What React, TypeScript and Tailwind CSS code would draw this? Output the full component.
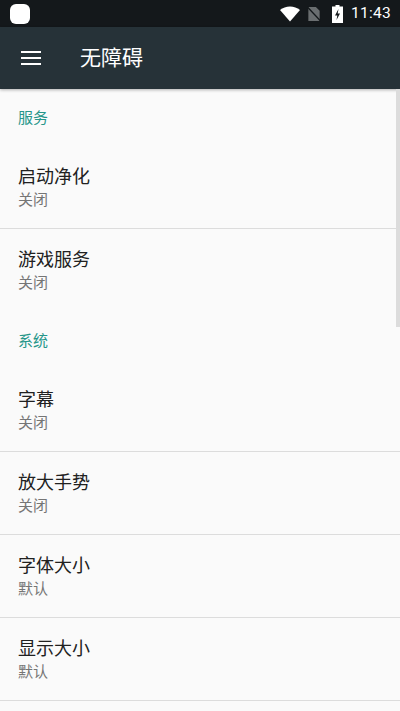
const FONT = "font-['Roboto','Noto_Sans_CJK_SC',sans-serif]"

function SettingRow({ title, summary, divider = true }: { title: string; summary: string; divider?: boolean }) {
  return (
    <div className={`h-[83px] px-[18px] pt-[18px] ${divider ? 'border-b border-[#dcdcdc]' : ''}`}>
      <div className="text-[18px] leading-[26px] text-[#212121]">{title}</div>
      <div className="text-[15px] leading-[21px] text-[#757575]">{summary}</div>
    </div>
  )
}

function SectionLabel({ label }: { label: string }) {
  return <div className="h-[57px] px-[18px] pt-[18px] text-[15px] leading-[22px] text-[#26968a]">{label}</div>
}

function StatusIcons() {
  return (
    <div className="flex items-center">
      {/* wifi */}
      <svg width="20" height="16" viewBox="0 0 20 15" className="mr-[7px]">
        <path d="M0 3.6C2.8 1.3 6.2 0 10 0s7.2 1.3 10 3.6L10 15z" fill="#fff" />
      </svg>
      {/* no sim */}
      <svg width="14" height="16" viewBox="0 0 14 17" className="mr-[11px]">
        <path d="M1 1h8l4 4v11H1z" fill="#6a6e70" />
        <path d="M0 1l14 15" stroke="#14181b" strokeWidth="1.5" />
      </svg>
      {/* battery charging */}
      <svg width="11" height="18" viewBox="0 0 11 18" className="mr-[8px]">
        <path d="M3.5 0h4v1.5H11V18H0V1.5h3.5z" fill="#fff" />
        <path d="M6.5 4L3 10.5h2.3L4.5 15 8 8.5H5.7z" fill="#14181b" />
      </svg>
      <span className="text-[15.5px] leading-none font-normal text-white tracking-[0.3px]">11:43</span>
    </div>
  )
}

export default function App() {
  return (
    <div className={`relative w-[400px] h-[711px] overflow-hidden bg-[#fafafa] ${FONT}`}>
      {/* Status bar */}
      <div className="h-[27px] bg-[#14181b] flex items-center justify-between pl-[10px] pr-[9px]">
        <div className="w-[20px] h-[20px] rounded-[6px] bg-white" />
        <StatusIcons />
      </div>

      {/* Toolbar */}
      <div className="h-[62px] bg-[#263238] flex items-center pl-[21px] shadow-[0_1px_3px_rgba(0,0,0,0.3)] relative">
        <div className="w-[20px] flex flex-col gap-[3.5px]">
          <div className="h-[2.5px] bg-white" />
          <div className="h-[2.5px] bg-white" />
          <div className="h-[2.5px] bg-white" />
        </div>
        <span className="ml-[39px] pt-[2px] text-[21px] text-white">无障碍</span>
      </div>

      {/* Settings list */}
      <SectionLabel label="服务" />
      <SettingRow title="启动净化" summary="关闭" />
      <SettingRow title="游戏服务" summary="关闭" divider={false} />
      <SectionLabel label="系统" />
      <SettingRow title="字幕" summary="关闭" />
      <SettingRow title="放大手势" summary="关闭" />
      <SettingRow title="字体大小" summary="默认" />
      <SettingRow title="显示大小" summary="默认" />

      {/* Scrollbar */}
      <div className="absolute right-0 top-[89px] w-[4px] h-[238px] bg-[#dcdcdc]" />
    </div>
  )
}
